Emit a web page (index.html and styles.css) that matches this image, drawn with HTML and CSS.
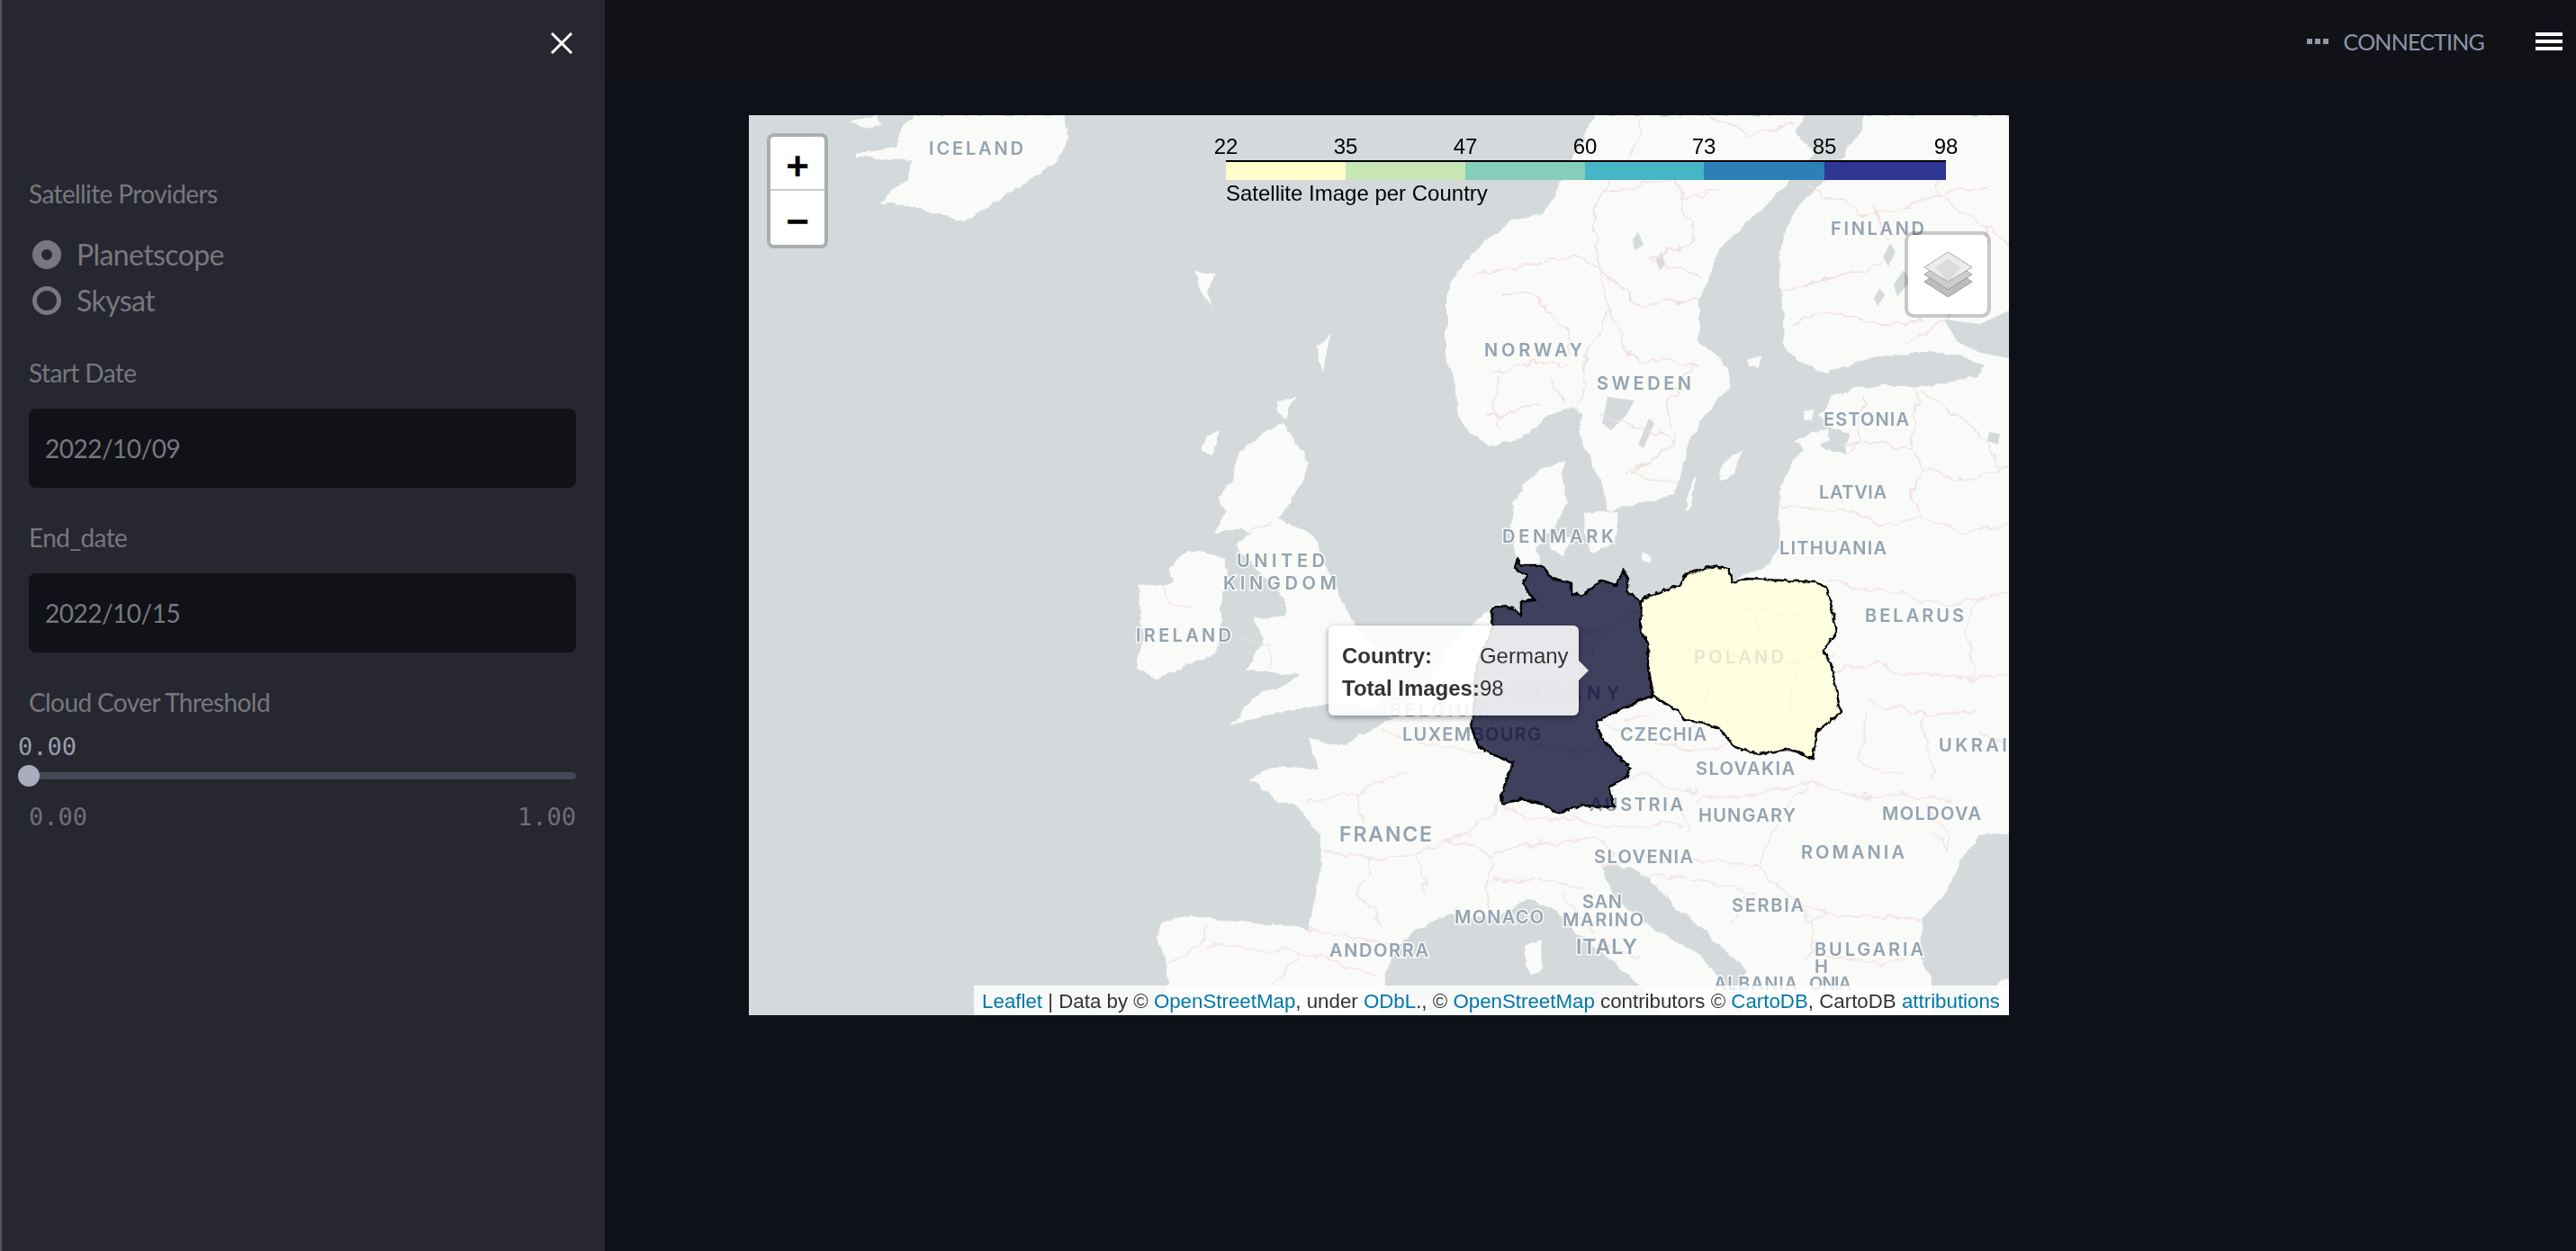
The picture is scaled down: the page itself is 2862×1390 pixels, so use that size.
FILE: index.html
```html
<!DOCTYPE html>
<html lang="en">
  <head>
    <meta charset="UTF-8" />
    <title>Satellite Images</title>
    <link rel="stylesheet" href="styles.css">
  </head>
  <body>
    <aside class="sidebar">
      <div class="close-row">
        <svg class="close-icon" viewBox="0 0 24 24"><path d="M1 1L23 23M23 1L1 23" /></svg>
      </div>

      <div class="label label-first">Satellite Providers</div>
      <div class="radio-group">
        <div class="radio-row"><span class="radio radio-on"></span>Planetscope</div>
        <div class="radio-row"><span class="radio"></span>Skysat</div>
      </div>

      <div class="label">Start Date</div>
      <div class="date-input">2022/10/09</div>

      <div class="label">End_date</div>
      <div class="date-input">2022/10/15</div>

      <div class="label">Cloud Cover Threshold</div>
      <div class="slider-value">0.00</div>
      <div class="slider">
        <div class="slider-track"></div>
        <div class="slider-thumb"></div>
      </div>
      <div class="slider-range"><span>0.00</span><span>1.00</span></div>
    </aside>

    <main class="main">
      <div class="topbar">
        <div class="status">
          <span class="dots"><i></i><i></i><i></i></span>
          <span class="status-text">CONNECTING</span>
        </div>
        <div class="burger"><i></i><i></i><i></i></div>
      </div>

      <div class="map">
        <svg class="map-canvas" viewBox="832 128 1400 1000" width="1400" height="1000">
          <defs>
            <filter id="rough" x="-5%" y="-5%" width="110%" height="110%" color-interpolation-filters="sRGB">
              <feTurbulence type="fractalNoise" baseFrequency="0.07" numOctaves="3" seed="4" />
              <feDisplacementMap in="SourceGraphic" scale="8" xChannelSelector="R" yChannelSelector="G" />
            </filter>
            <filter id="wiggle" x="-5%" y="-5%" width="110%" height="110%" color-interpolation-filters="sRGB">
              <feTurbulence type="fractalNoise" baseFrequency="0.05" numOctaves="3" seed="12" />
              <feDisplacementMap in="SourceGraphic" scale="16" xChannelSelector="R" yChannelSelector="G" />
            </filter>
            <filter id="jag" x="-5%" y="-5%" width="110%" height="110%" color-interpolation-filters="sRGB">
              <feTurbulence type="fractalNoise" baseFrequency="0.16" numOctaves="2" seed="9" />
              <feDisplacementMap in="SourceGraphic" scale="5" xChannelSelector="R" yChannelSelector="G" />
            </filter>
          </defs>

          <rect x="832" y="128" width="1400" height="1000" fill="#d4dadc" />

          <!-- land -->
          <g class="land" filter="url(#rough)">
            <path d="M1016 128L1002 143 995 163 951 170 951 175 1013 177 1009 197 986 217 980 225 1031 233 1071 247 1102 227 1134 207 1169 183 1187 153 1183 128Z" />
            <path d="M942 132L975 128 980 140 960 142Z" />
            <path d="M1328 302L1350 304 1342 325 1346 343 1338 330Z" />
            <path d="M1479 373L1472 400 1470 415 1465 395 1463 385Z" />
            <path d="M1419 445L1441 441 1432 452 1428 465 1420 458Z" />
            <path d="M1354 478L1345 505 1335 500 1340 485Z" />
            <path d="M1426 471L1454 515 1435 558 1419 575 1460 595 1472 628 1459 602 1486 655 1504 692 1520 715 1542 730 1545 760 1530 785 1477 782 1406 794 1368 806 1392 774 1428 762 1442 749 1384 745 1406 709 1390 688 1428 684 1428 664 1372 606 1392 590 1350 590 1361 570 1352 553 1370 533 1375 504 1406 480Z" />
            <path d="M1321 611L1361 619 1366 647 1357 660 1357 700 1352 725 1285 755 1261 741 1270 709 1265 651 1303 647 1299 631Z" />
            <path d="M1772 128L1716 238 1679 245 1647 271 1613 308 1607 335 1607 395 1616 421 1622 468 1654 496 1691 486 1722 461 1747 451 1757 461 1754 481 1772 521 1788 568 1810 561 1860 551 1876 495 1885 475 1922 428 1922 408 1888 381 1888 335 1910 278 1954 235 2000 191 2016 171 1994 145 2004 128Z" />
            <path d="M2072 128L2066 148 2029 201 2000 225 1985 251 1976 285 1980 330 1982 385 1995 400 2029 415 2060 403 2091 395 2140 392 2180 395 2205 408 2197 418 2165 425 2135 430 2091 428 2060 432 2035 441 2030 452 2022 461 2035 475 2054 481 2051 505 2030 500 2015 490 1991 515 1979 538 1976 571 1979 605 1966 628 1945 635 1925 647 1920 632 1904 629 1873 638 1867 650 1824 665 1808 655 1804 640 1795 650 1779 645 1757 662 1746 660 1746 648 1724 642 1712 628 1705 610 1725 590 1741 561 1735 535 1740 511 1715 520 1690 540 1682 561 1679 595 1685 618 1683 632 1697 640 1692 648 1699 660 1706 667 1690 668 1690 685 1681 675 1663 673 1640 690 1612 715 1600 740 1585 760 1560 785 1547 798 1497 825 1479 828 1454 821 1466 855 1422 851 1388 865 1420 890 1441 895 1466 928 1469 961 1454 1031 1385 1025 1322 1018 1291 1025 1285 1041 1297 1075 1297 1095 1294 1128 1530 1128 1535 1095 1547 1061 1566 1038 1610 1016 1660 1021 1697 998 1729 1011 1754 1038 1791 1068 1822 1095 1850 1128 1905 1128 1925 1105 1885 1058 1841 1035 1797 1001 1779 965 1795 960 1822 968 1860 1005 1916 1055 1941 1078 1935 1095 1935 1128 2147 1128 2147 1088 2132 1061 2135 1021 2160 995 2179 958 2197 928 2240 925 2240 128Z" />
            <path d="M1760 570L1797 568 1795 600 1770 615 1762 595Z" />
            <path d="M1726 590L1748 600 1735 618 1722 608Z" />
            <path d="M1935 500L1926 525 1910 535 1916 512Z" />
            <path d="M1885 528L1876 568 1872 566 1880 535Z" />
            <path d="M1941 400L1957 395 1954 408 1944 408Z" />
            <path d="M1994 490L2030 475 2035 490 2004 501Z" />
            <path d="M2004 458L2016 455 2014 468 2006 466Z" />
            <path d="M1824 614L1834 616 1832 624 1824 622Z" />
            <path d="M1694 1050L1712 1045 1713 1075 1702 1085 1696 1072Z" />
            <path d="M2240 1083L2220 1090 2200 1128 2240 1128Z" />
          </g>

          <!-- lakes -->
          <g class="lake">
            <path d="M1786 441L1816 445 1806 462 1790 478 1780 470Z" />
            <path d="M1832 465L1838 470 1826 498 1820 494Z" />
            <path d="M2160 355L2200 360 2232 345 2232 398 2200 392 2175 380Z" />
            <path d="M2100 270L2106 280 2098 296 2092 286Z" />
            <path d="M2115 300L2122 312 2108 330 2104 316Z" />
            <path d="M2088 320L2094 328 2086 340 2082 332Z" />
            <path d="M1820 258L1826 272 1816 278 1814 266Z" />
            <path d="M1846 280L1850 294 1844 300 1840 288Z" />
            <path d="M2210 480L2222 482 2220 494 2208 490Z" />
          </g>

          <g filter="url(#wiggle)">
            <!-- borders traced over Scandinavia and the Baltics -->
            <g class="borders" transform="translate(1260 128) scale(0.625 0.3333)">
              <path d="M905,0 890,100 830,260 815,370 825,500 845,650 825,720 800,820 795,990" />
              <path d="M600,530 680,510 740,470 800,480 850,540 900,640 1000,610" />
              <path d="M650,600 700,600 760,680 780,800" />
              <path d="M630,860 700,820 770,830" />
              <path d="M620,1000 680,990 720,960" />
              <path d="M650,870 640,960 655,1050" />
              <path d="M740,880 770,960" />
              <path d="M830,260 960,210 1000,420 920,480 1010,540" />
              <path d="M845,650 880,810 1000,830 950,960 960,1100 870,1200" />
              <path d="M830,1000 900,1040 960,1090 880,1200 980,1220" />
              <path d="M1025,0 1090,60 1170,30" />
              <path d="M1040,250 970,280" />
              <path d="M1200,240 1300,330 1370,310 1430,260 1520,250" />
              <path d="M1150,590 1240,540 1330,500" />
              <path d="M1170,700 1240,650 1330,700 1400,690" />
              <path d="M1310,300 1340,420" />
              <path d="M1440,100 1430,260 1510,370 1555,430" />
              <path d="M1510,370 1520,420 1440,680 1370,770" />
              <path d="M1250,1100 1300,1090 1380,1110" />
              <path d="M1390,920 1380,1110 1400,1180 1380,1240 1400,1340" />
              <path d="M1300,930 1290,1090 1270,1130" />
              <path d="M1140,1300 1220,1320 1280,1320 1330,1370 1400,1340 1470,1390 1555,1370" />
              <path d="M1400,920 1460,1000 1520,1090 1540,1200" />
              <path d="M1400,1180 1470,1220 1555,1180" />
              <path d="M250,1360 200,1385" />
            </g>

            <!-- borders traced over the continent -->
            <g class="borders" transform="translate(1260 628) scale(0.625 0.3333)">
              <path d="M50,70 60,130 100,140" />
              <path d="M190,250 240,260 240,350" />
              <path d="M440,540 490,590 560,610 620,620" />
              <path d="M655,770 640,820 600,880 560,930 620,940 640,1000 620,1080 640,1170" />
              <path d="M300,800 400,760 490,680" />
              <path d="M340,960 420,980 500,960 600,900" />
              <path d="M500,960 520,1090" />
              <path d="M420,980 400,1100 440,1210" />
              <path d="M400,760 410,880" />
              <path d="M310,1210 380,1240 470,1270" />
              <path d="M130,1200 120,1270 60,1330" />
              <path d="M130,1270 300,1290 430,1370" />
              <path d="M300,1290 250,1400" />
              <path d="M660,800 700,850 780,840 820,870 900,870 970,860" />
              <path d="M630,960 720,930 830,920 850,950 820,1000" />
              <path d="M640,1050 730,1050 800,1080" />
              <path d="M760,1100 820,1250 900,1310" />
              <path d="M840,720 900,700 960,740 1000,760" />
              <path d="M970,800 990,890" />
              <path d="M830,1000 900,980 1000,980 1100,1000" />
              <path d="M900,1030 960,1040 1040,1060 1100,1090" />
              <path d="M1090,1100 1060,1200" />
              <path d="M1100,1000 1140,1060 1180,1130 1200,1190 1230,1160" />
              <path d="M990,780 1050,770 1130,760 1200,720" />
              <path d="M1200,720 1150,840 1120,960 1110,1000" />
              <path d="M1200,720 1290,770 1380,760 1450,790" />
              <path d="M1400,790 1440,870 1450,950 1420,900" />
              <path d="M1180,1130 1250,1170 1340,1170 1400,1180" />
              <path d="M1200,1190 1210,1280 1190,1320" />
              <path d="M1210,1300 1340,1330 1400,1290" />
              <path d="M1240,350 1310,330 1400,370 1470,380 1555,370" />
              <path d="M1230,50 1300,80 1380,100 1450,130 1555,90" />
              <path d="M1490,380 1480,200 1510,100" />
              <path d="M1300,450 1400,500 1500,480" />
              <path d="M1300,500 1290,650 1360,700" />
              <path d="M1400,500 1420,700" />
              <path d="M1500,550 1555,600" />
              <path d="M870,520 920,490" />
              <path d="M820,510 880,570 1000,620 1060,600" />
              <path d="M960,600 1000,520" />
              <path d="M900,120 1000,150 1100,140 1230,190" />
              <path d="M1000,150 1060,300 1010,470" />
              <path d="M1060,300 1180,320 1240,300" />
              <path d="M1100,140 1120,260" />
              <path d="M1180,320 1170,500" />
              <path d="M700,200 830,220 900,150" />
              <path d="M830,220 800,400 850,500" />
              <path d="M700,600 830,620" />
            </g>
          </g>

          <!-- place names -->
          <g class="place">
            <text x="1032" y="172" textLength="105">ICELAND</text>
            <text x="1374" y="630" textLength="98">UNITED</text>
            <text x="1359" y="655" textLength="126">KINGDOM</text>
            <text x="1262" y="713" textLength="106">IRELAND</text>
            <text x="1649" y="396" textLength="109">NORWAY</text>
            <text x="1774" y="433" textLength="105">SWEDEN</text>
            <text x="2034" y="261" textLength="104">FINLAND</text>
            <text x="2026" y="473" textLength="95">ESTONIA</text>
            <text x="2021" y="554" textLength="75">LATVIA</text>
            <text x="1977" y="616" textLength="119">LITHUANIA</text>
            <text x="1669" y="603" textLength="124">DENMARK</text>
            <text x="2072" y="691" textLength="110">BELARUS</text>
            <text x="1882" y="737" textLength="100">POLAND</text>
            <text x="1659" y="777" textLength="140">GERMANY</text>
            <text x="1544" y="796" textLength="110">BELGIUM</text>
            <text x="1558" y="823" textLength="154">LUXEMBOURG</text>
            <text x="1800" y="823" textLength="96">CZECHIA</text>
            <text x="1884" y="861" textLength="110">SLOVAKIA</text>
            <text x="1766" y="901" textLength="104">AUSTRIA</text>
            <text x="1887" y="913" textLength="108">HUNGARY</text>
            <text x="2154" y="835" textLength="110">UKRAINE</text>
            <text x="2091" y="911" textLength="110">MOLDOVA</text>
            <text class="place-big" x="1488" y="935" textLength="103">FRANCE</text>
            <text x="1771" y="959" textLength="110">SLOVENIA</text>
            <text x="2001" y="954" textLength="115">ROMANIA</text>
            <text x="1924" y="1013" textLength="80">SERBIA</text>
            <text x="1616" y="1026" textLength="99">MONACO</text>
            <text x="1758" y="1009" textLength="44">SAN</text>
            <text x="1736" y="1029" textLength="90">MARINO</text>
            <text class="place-big" x="1751" y="1060" textLength="68">ITALY</text>
            <text x="1477" y="1063" textLength="110">ANDORRA</text>
            <text x="2016" y="1062" textLength="121">BULGARIA</text>
            <text x="2016" y="1081">H</text>
            <text x="2010" y="1100" textLength="47">ONIA</text>
            <text x="1904" y="1100" textLength="93">ALBANIA</text>
          </g>

          <!-- choropleth -->
          <path class="country country-de" filter="url(#jag)" d="M1686 620L1690 628 1712 628 1724 642 1746 648 1746 660 1757 662 1779 645 1795 650 1804 633 1808 643 1808 657 1824 668 1822 700 1831 715 1831 740 1837 773 1824 777 1793 792 1773 802 1779 820 1811 853 1808 862 1788 875 1793 897 1757 895 1730 903 1712 893 1690 888 1669 893 1668 883 1681 847 1661 840 1643 830 1634 807 1637 793 1640 740 1659 696 1657 680 1663 673 1681 675 1690 685 1690 668 1706 667 1699 660 1692 648 1697 640 1683 632Z" />
          <path class="country country-pl" filter="url(#jag)" d="M1824 665L1867 650 1873 638 1904 629 1920 632 1925 647 1942 643 2018 647 2030 653 2041 703 2025 722 2034 737 2045 792 2018 813 2014 843 1989 832 1954 838 1927 830 1911 810 1893 803 1871 800 1864 790 1840 775 1837 773 1831 740 1831 715 1822 700 1824 668Z" />

          <!-- legend -->
          <g class="legend">
            <rect x="1362" y="180" width="133" height="20" fill="#fdfecb" />
            <rect x="1495" y="180" width="133" height="20" fill="#c7e8b5" />
            <rect x="1628" y="180" width="133" height="20" fill="#85ceba" />
            <rect x="1761" y="180" width="132" height="20" fill="#46b5c5" />
            <rect x="1893" y="180" width="134" height="20" fill="#2d7fb8" />
            <rect x="2027" y="180" width="135" height="20" fill="#2f3693" />
            <rect x="1362" y="178" width="800" height="2" fill="#000" />
            <text class="tick" x="1362" y="171">22</text>
            <text class="tick" x="1495" y="171">35</text>
            <text class="tick" x="1628" y="171">47</text>
            <text class="tick" x="1761" y="171">60</text>
            <text class="tick" x="1893" y="171">73</text>
            <text class="tick" x="2027" y="171">85</text>
            <text class="tick" x="2162" y="171">98</text>
            <text class="caption" x="1362" y="223">Satellite Image per Country</text>
          </g>
        </svg>

        <div class="zoom-control">
          <div class="zoom-btn">+</div>
          <div class="zoom-btn">−</div>
        </div>

        <div class="layers-control">
          <svg viewBox="0 0 53 50" width="53" height="50">
            <path d="M26.5 16L53 33 26.5 50 0 33Z" fill="#bdbdbd" stroke="#9a9a9a" />
            <path d="M26.5 8L53 25 26.5 42 0 25Z" fill="#cdcdcd" stroke="#9a9a9a" />
            <path d="M26.5 0L53 17 26.5 33 0 17Z" fill="#ececec" stroke="#a8a8a8" />
            <path d="M26.5 8L41 17 26.5 33 12 17Z" fill="#dcdcdc" />
          </svg>
        </div>

        <div class="tooltip">
          <b>Country:</b><span>Germany</span>
          <b>Total Images:</b><span>98</span>
        </div>

        <div class="attribution">
          <a>Leaflet</a> | Data by © <a>OpenStreetMap</a>, under <a>ODbL</a>., © <a>OpenStreetMap</a> contributors © <a>CartoDB</a>, CartoDB <a>attributions</a>
        </div>
      </div>
    </main>
  </body>
</html>
```

FILE: styles.css
```css
html, body {
  margin: 0;
  height: 100%;
}

body {
  display: flex;
  background-color: #0e1117;
  overflow: hidden;
  font-family: Lato, "Noto Sans", sans-serif;
}

/* sidebar */

.sidebar {
  box-sizing: border-box;
  flex: 0 0 672px;
  height: 100vh;
  padding: 0 32px 0 30px;
  background-color: #262730;
  border-left: 2px solid #54555e;
  color: #77787f;
}

.close-row {
  display: flex;
  justify-content: flex-end;
  align-items: center;
  height: 96px;
  padding-right: 4px;
}

.close-icon {
  width: 24px;
  height: 24px;
  fill: none;
  stroke: #fff;
  stroke-width: 3;
}

.label {
  margin-top: 35px;
  font-size: 28px;
  line-height: 40px;
  letter-spacing: -0.6px;
}

.label-first {
  margin-top: 99px;
}

.radio-group {
  margin-top: 22px;
}

.radio-row {
  display: flex;
  align-items: center;
  height: 51px;
  font-size: 32px;
  letter-spacing: -0.6px;
}

.radio {
  box-sizing: border-box;
  width: 32px;
  height: 32px;
  margin: 0 17px 0 4px;
  border: 5px solid #77787f;
  border-radius: 50%;
}

.radio-on {
  border-width: 10px;
}

.date-input {
  box-sizing: border-box;
  height: 88px;
  margin-top: 20px;
  padding-left: 18px;
  background-color: #101217;
  border-radius: 8px;
  font-size: 28px;
  line-height: 88px;
  letter-spacing: -0.5px;
}

.slider-value {
  margin: 14px 0 0 -12px;
  font-family: "DejaVu Sans Mono", monospace;
  font-size: 27px;
  line-height: 32px;
  color: #9a9eae;
}

.slider {
  position: relative;
  height: 24px;
  margin-top: 4px;
}

.slider-track {
  position: absolute;
  top: 8px;
  left: 0;
  right: 0;
  height: 8px;
  background-color: #454754;
  border-radius: 4px;
}

.slider-thumb {
  position: absolute;
  top: 0;
  left: -12px;
  width: 24px;
  height: 24px;
  background-color: #a8aebf;
  border-radius: 50%;
}

.slider-range {
  display: flex;
  justify-content: space-between;
  margin-top: 18px;
  font-family: "DejaVu Sans Mono", monospace;
  font-size: 27px;
  line-height: 32px;
  color: #6e6f78;
}

/* main area */

.main {
  flex: 1;
  display: flex;
  flex-direction: column;
}

.topbar {
  display: flex;
  justify-content: flex-end;
  align-items: flex-start;
  gap: 57px;
  height: 128px;
  padding-right: 15px;
  background: linear-gradient(#111218 90px, transparent 90px);
}

.status,
.burger {
  height: 92px;
  display: flex;
  align-items: center;
}

.status {
  gap: 17px;
  color: #8f94a6;
  font-size: 25px;
  letter-spacing: -0.8px;
}

.dots {
  display: flex;
  gap: 3px;
}

.dots i {
  width: 6px;
  height: 6px;
  background-color: #9397a8;
}

.burger {
  flex-direction: column;
  justify-content: center;
  gap: 4px;
}

.burger i {
  width: 30px;
  height: 4px;
  background-color: #fff;
}

/* map */

.map {
  position: relative;
  width: 1400px;
  height: 1000px;
  margin-left: 160px;
  overflow: hidden;
  font-family: "Liberation Sans", Arial, sans-serif;
}

.map-canvas {
  display: block;
}

.land {
  fill: #fafaf8;
}

.lake {
  fill: #d4dadc;
}

.borders path {
  fill: none;
  stroke: #efdfe0;
  stroke-width: 1.4;
  vector-effect: non-scaling-stroke;
}

.place text {
  font-family: Inter, "Noto Sans", sans-serif;
  font-size: 20px;
  font-weight: 600;
  fill: #95a3b0;
  stroke: #fafaf8;
  stroke-width: 3px;
  paint-order: stroke;
}

.place .place-big {
  font-size: 23px;
}

.country {
  stroke: #000;
  stroke-width: 2.5;
  stroke-linejoin: round;
}

.country-de {
  fill: #00002b;
  fill-opacity: 0.75;
}

.country-pl {
  fill: #ffffd8;
  fill-opacity: 0.75;
}

.tick {
  font-size: 24px;
  text-anchor: middle;
}

.caption {
  font-size: 24px;
}

.zoom-control {
  position: absolute;
  top: 20px;
  left: 20px;
  width: 60px;
  background-color: #fff;
  border: 4px solid rgba(0, 0, 0, 0.2);
  border-radius: 8px;
  background-clip: padding-box;
}

.zoom-btn {
  box-sizing: border-box;
  display: flex;
  justify-content: center;
  align-items: center;
  height: 60px;
  padding-top: 7px;
  font-size: 44px;
  font-weight: bold;
  color: #000;
}

.zoom-btn:first-child {
  border-bottom: 2px solid #ccc;
}

.layers-control {
  position: absolute;
  top: 129px;
  left: 1284px;
  display: flex;
  justify-content: center;
  align-items: center;
  width: 88px;
  height: 88px;
  background-color: #fff;
  border: 4px solid rgba(0, 0, 0, 0.2);
  border-radius: 10px;
  background-clip: padding-box;
}

.tooltip {
  position: absolute;
  top: 567px;
  left: 644px;
  box-sizing: border-box;
  display: grid;
  grid-template-columns: max-content max-content;
  justify-content: start;
  align-content: center;
  width: 278px;
  height: 100px;
  padding: 4px 0 0 15px;
  background-color: rgba(255, 255, 255, 0.88);
  border-radius: 6px;
  box-shadow: 0 2px 6px rgba(0, 0, 0, 0.4);
  color: #333;
  font-size: 24px;
  line-height: 36px;
  white-space: nowrap;
}

.tooltip::after {
  content: "";
  position: absolute;
  top: 39px;
  left: 278px;
  border: 11px solid transparent;
  border-left-color: rgba(255, 255, 255, 0.88);
}

.attribution {
  position: absolute;
  right: 0;
  bottom: 0;
  height: 33px;
  padding: 0 10px 0 9px;
  background-color: rgba(255, 255, 255, 0.8);
  color: #333;
  font-size: 22.3px;
  line-height: 35px;
  white-space: nowrap;
}

.attribution a {
  color: #0078a8;
}
```
